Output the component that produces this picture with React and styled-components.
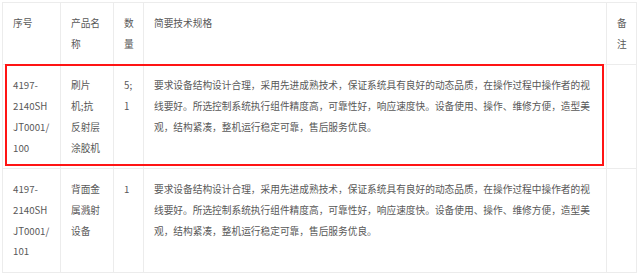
import React from 'react'
import styled, { createGlobalStyle } from 'styled-components'

const GlobalStyle = createGlobalStyle`
  html, body {
    margin: 0;
    padding: 0;
    background: #fff;
  }
  body {
    font-family: "Noto Sans CJK SC", "Noto Sans", sans-serif;
  }
`

const spec =
  '要求设备结构设计合理，采用先进成熟技术，保证系统具有良好的动态品质，在操作过程中操作者的视线要好。所选控制系统执行组件精度高，可靠性好，响应速度快。设备使用、操作、维修方便，造型美观，结构紧凑，整机运行稳定可靠，售后服务优良。'

const rows = [
  {
    code: ['4197-', '2140SH', 'JT0001/', '100'],
    name: '刷片机;抗反射层涂胶机',
    qty: ['5;', '1'],
    spec,
  },
  {
    code: ['4197-', '2140SH', 'JT0001/', '101'],
    name: '背面金属溅射设备',
    qty: ['1'],
    spec,
  },
]

// parts may wrap between each other when the column is too narrow
const Breakable = ({ parts }) =>
  parts.map((part, j) => (
    <React.Fragment key={j}>
      {j > 0 && <wbr />}
      {part}
    </React.Fragment>
  ))

const App = () => {
  return (
    <Page>
      <GlobalStyle />
      <Frame>
        <Table>
          <colgroup>
            <col style={{ width: 58 }} />
            <col style={{ width: 53 }} />
            <col style={{ width: 30 }} />
            <col style={{ width: 463 }} />
            <col style={{ width: 30 }} />
          </colgroup>
          <thead>
            <tr>
              <Cell as='th'>序号</Cell>
              <Cell as='th' $narrow>产品名称</Cell>
              <Cell as='th'>数量</Cell>
              <Cell as='th'>简要技术规格</Cell>
              <Cell as='th'>备注</Cell>
            </tr>
          </thead>
          <tbody>
            {rows.map((r, i) => (
              <tr key={i}>
                <Cell><Breakable parts={r.code} /></Cell>
                <Cell $narrow>{r.name}</Cell>
                <Cell><Breakable parts={r.qty} /></Cell>
                <Cell>{r.spec}</Cell>
                <Cell></Cell>
              </tr>
            ))}
          </tbody>
        </Table>
        <Highlight />
      </Frame>
    </Page>
  )
}

const Page = styled.main`
  padding: 2px 4px 4px 2px;
`

const Frame = styled.div`
  position: relative;
  width: 634px;
`

const Table = styled.table`
  width: 634px;
  table-layout: fixed;
  border-collapse: collapse;
  border: 1px solid #ececec;
`

const Cell = styled.td`
  border: 1px solid #ececec;
  padding: 10px ${(p) => (p.$narrow ? '12px' : '10px')} 10px 10px;
  vertical-align: top;
  text-align: left;
  font-weight: normal;
  font-size: 9.7px;
  line-height: 20.7px;
  color: #585858;
`

const Highlight = styled.div`
  position: absolute;
  left: 3px;
  top: 62px;
  width: 595px;
  height: 98px;
  border: 2px solid #ff1414;
  pointer-events: none;
`

export default App
